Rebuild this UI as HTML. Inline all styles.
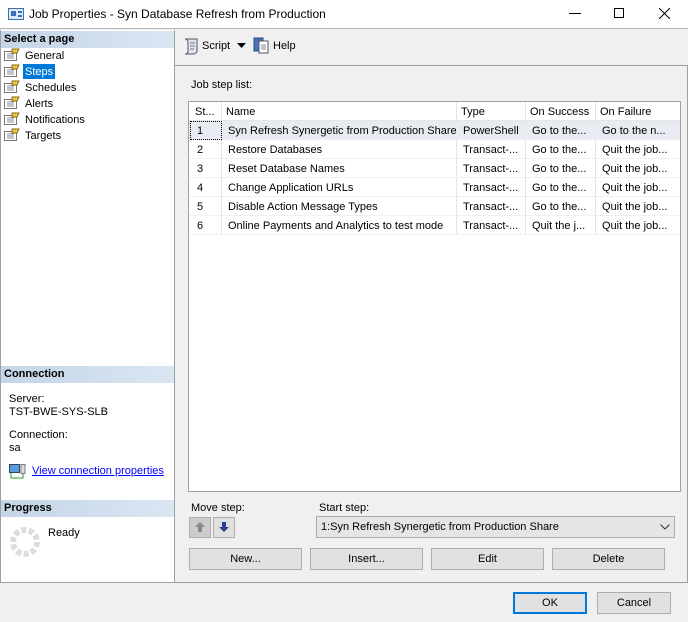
<!DOCTYPE html>
<html><head><style>
*{box-sizing:border-box;margin:0;padding:0}
body{width:688px;height:622px;background:#f0f0f0;font-family:"Liberation Sans",sans-serif;font-size:11px;color:#000;position:relative;overflow:hidden}
.a{position:absolute}
.hdr{position:absolute;left:1px;width:173px;height:17px;background:linear-gradient(90deg,#c4d5e7,#dae6f2);font-weight:bold;font-size:11px;padding:2px 3px}
.btn{position:absolute;height:22px;border:1px solid #adadad;background:#e1e1e1;text-align:center;line-height:20px}
.row{position:absolute;left:189px;width:491px;height:19px;border-bottom:1px solid #f0f0f0}
.row span{position:absolute;top:4px;white-space:nowrap}
.ic{position:absolute;left:3px;width:16px;height:13px}
</style></head><body>
<div class="a" style="left:0;top:0;width:688px;height:29px;background:#fff;border-bottom:1px solid #b4b4b4"></div>
<svg class="a" style="left:8px;top:7px" width="16" height="14"><rect x="0.5" y="1.5" width="15" height="11" fill="#dfe9f5" stroke="#3b6fb6"/><rect x="3" y="4" width="5" height="5" fill="#3b6fb6"/><rect x="10" y="4" width="4" height="2" fill="#3b6fb6"/><rect x="10" y="8" width="4" height="2" fill="#3b6fb6"/></svg>
<div class="a" style="left:29px;top:7px;font-size:12px">Job Properties - Syn Database Refresh from Production</div>
<div class="a" style="left:569px;top:13px;width:12px;height:1px;background:#000"></div>
<div class="a" style="left:614px;top:8px;width:10px;height:10px;border:1px solid #000"></div>
<svg class="a" style="left:659px;top:8px" width="11" height="11"><path d="M0 0L11 11M11 0L0 11" stroke="#000"/></svg>

<div class="a" style="left:174px;top:65px;width:514px;height:518px;border:1px solid #a0a0a0"></div>
<div class="a" style="left:0;top:30px;width:175px;height:553px;background:#fff;border:1px solid #a0a0a0;border-top:none"></div>
<div class="hdr" style="top:31px">Select a page</div>
<div class="a" style="left:0;top:48px">
<div style="position:relative;height:16px"><svg class="ic" style="left:4px" viewBox="0 0 16 13"><rect x="0.5" y="3.5" width="12" height="9" fill="#fff" stroke="#777"/><path d="M3 6h7M3 8h7M3 10h7" stroke="#889"/><path d="M8 1l7 0-2 4-5 0z" fill="#e8c84a" stroke="#8a6a10"/></svg><span class="a" style="left:25px;top:2px">General</span></div>
<div style="position:relative;height:16px"><svg class="ic" style="left:4px" viewBox="0 0 16 13"><rect x="0.5" y="3.5" width="12" height="9" fill="#fff" stroke="#777"/><path d="M3 6h7M3 8h7M3 10h7" stroke="#889"/><path d="M8 1l7 0-2 4-5 0z" fill="#e8c84a" stroke="#8a6a10"/></svg><span class="a" style="left:23px;top:0;background:#0078d7;color:#fff;padding:2px 2px;height:15px">Steps</span></div>
<div style="position:relative;height:16px"><svg class="ic" style="left:4px" viewBox="0 0 16 13"><rect x="0.5" y="3.5" width="12" height="9" fill="#fff" stroke="#777"/><path d="M3 6h7M3 8h7M3 10h7" stroke="#889"/><path d="M8 1l7 0-2 4-5 0z" fill="#e8c84a" stroke="#8a6a10"/></svg><span class="a" style="left:25px;top:2px">Schedules</span></div>
<div style="position:relative;height:16px"><svg class="ic" style="left:4px" viewBox="0 0 16 13"><rect x="0.5" y="3.5" width="12" height="9" fill="#fff" stroke="#777"/><path d="M3 6h7M3 8h7M3 10h7" stroke="#889"/><path d="M8 1l7 0-2 4-5 0z" fill="#e8c84a" stroke="#8a6a10"/></svg><span class="a" style="left:25px;top:2px">Alerts</span></div>
<div style="position:relative;height:16px"><svg class="ic" style="left:4px" viewBox="0 0 16 13"><rect x="0.5" y="3.5" width="12" height="9" fill="#fff" stroke="#777"/><path d="M3 6h7M3 8h7M3 10h7" stroke="#889"/><path d="M8 1l7 0-2 4-5 0z" fill="#e8c84a" stroke="#8a6a10"/></svg><span class="a" style="left:25px;top:2px">Notifications</span></div>
<div style="position:relative;height:16px"><svg class="ic" style="left:4px" viewBox="0 0 16 13"><rect x="0.5" y="3.5" width="12" height="9" fill="#fff" stroke="#777"/><path d="M3 6h7M3 8h7M3 10h7" stroke="#889"/><path d="M8 1l7 0-2 4-5 0z" fill="#e8c84a" stroke="#8a6a10"/></svg><span class="a" style="left:25px;top:2px">Targets</span></div>
</div>

<div class="hdr" style="top:366px">Connection</div>
<div class="a" style="left:9px;top:393px;line-height:13px">Server:<br>TST-BWE-SYS-SLB</div>
<div class="a" style="left:9px;top:429px;line-height:13px">Connection:<br>sa</div>
<svg class="a" style="left:9px;top:464px" width="17" height="16"><rect x="0.5" y="0.5" width="10" height="8" fill="#5a9be0" stroke="#345"/><rect x="12" y="0.5" width="4" height="9" fill="#ddd" stroke="#777"/><path d="M2 9v5h12v-4" stroke="#2a9a2a" fill="none"/></svg>
<div class="a" style="left:32px;top:465px;color:#0000ff;text-decoration:underline">View connection properties</div>
<div class="hdr" style="top:500px">Progress</div>
<svg class="a" style="left:9px;top:526px" width="32" height="32"><circle cx="16" cy="16" r="12" fill="none" stroke="#ddd" stroke-width="6" stroke-dasharray="5 2.5"/></svg>
<div class="a" style="left:48px;top:527px">Ready</div>

<svg class="a" style="left:182px;top:37px" width="18" height="18"><path d="M3 2h12v12c0 2-2 3-4 3H3c2 0 3-1 3-3V5C6 3 4 2 3 2z" fill="#dde4ef" stroke="#556"/><path d="M8 6h5M8 9h5M8 12h4" stroke="#778"/></svg>
<div class="a" style="left:202px;top:40px">Script</div>
<svg class="a" style="left:237px;top:43px" width="9" height="5"><path d="M0 0h9L4.5 5z" fill="#000"/></svg>
<svg class="a" style="left:253px;top:37px" width="17" height="17"><rect x="1" y="1" width="9" height="13" fill="#4a72b8" stroke="#2b4a80"/><rect x="6" y="4" width="9" height="12" fill="#fff" stroke="#556"/><path d="M8 8h5M8 10h5M8 12h5" stroke="#889"/></svg>
<div class="a" style="left:273px;top:40px">Help</div>

<div class="a" style="left:191px;top:79px">Job step list:</div>
<div class="a" style="left:188px;top:101px;width:493px;height:391px;background:#fff;border:1px solid #a0a0a0"></div>
<div class="a" style="left:189px;top:102px;width:491px;height:19px;border-bottom:1px solid #e5e5e5"></div>
<div class="a" style="left:221px;top:102px;width:1px;height:133px;background:#e5e5e5"></div>
<div class="a" style="left:456px;top:102px;width:1px;height:133px;background:#e5e5e5"></div>
<div class="a" style="left:525px;top:102px;width:1px;height:133px;background:#e5e5e5"></div>
<div class="a" style="left:595px;top:102px;width:1px;height:133px;background:#e5e5e5"></div>
<div class="a" style="left:195px;top:106px">St...</div><div class="a" style="left:226px;top:106px">Name</div><div class="a" style="left:461px;top:106px">Type</div><div class="a" style="left:530px;top:106px">On Success</div><div class="a" style="left:600px;top:106px">On Failure</div>
<div class="row" style="top:121px;background:#e8ecf2"><span style="left:8px">1</span><span style="left:39px">Syn Refresh Synergetic from Production Share</span><span style="left:274px">PowerShell</span><span style="left:343px">Go to the...</span><span style="left:413px">Go to the n...</span><div class="a" style="left:1px;top:0;width:32px;height:19px;border:1px dotted #000"></div></div>
<div class="row" style="top:140px"><span style="left:8px">2</span><span style="left:39px">Restore Databases</span><span style="left:274px">Transact-...</span><span style="left:343px">Go to the...</span><span style="left:413px">Quit the job...</span></div>
<div class="row" style="top:159px"><span style="left:8px">3</span><span style="left:39px">Reset Database Names</span><span style="left:274px">Transact-...</span><span style="left:343px">Go to the...</span><span style="left:413px">Quit the job...</span></div>
<div class="row" style="top:178px"><span style="left:8px">4</span><span style="left:39px">Change Application URLs</span><span style="left:274px">Transact-...</span><span style="left:343px">Go to the...</span><span style="left:413px">Quit the job...</span></div>
<div class="row" style="top:197px"><span style="left:8px">5</span><span style="left:39px">Disable Action Message Types</span><span style="left:274px">Transact-...</span><span style="left:343px">Go to the...</span><span style="left:413px">Quit the job...</span></div>
<div class="row" style="top:216px"><span style="left:8px">6</span><span style="left:39px">Online Payments and Analytics to test mode</span><span style="left:274px">Transact-...</span><span style="left:343px">Quit the j...</span><span style="left:413px">Quit the job...</span></div>

<div class="a" style="left:191px;top:502px">Move step:</div>
<div class="a" style="left:189px;top:517px;width:22px;height:21px;background:#ccc;border:1px solid #adadad"></div>
<svg class="a" style="left:194px;top:521px" width="12" height="12"><path d="M6 1L11 6H8V11H4V6H1z" fill="#888"/></svg>
<div class="a" style="left:213px;top:517px;width:22px;height:21px;background:#e1e1e1;border:1px solid #adadad"></div>
<svg class="a" style="left:218px;top:521px" width="12" height="12"><path d="M6 11L11 6H8V1H4V6H1z" fill="#2c3f8f"/></svg>
<div class="a" style="left:319px;top:502px">Start step:</div>
<div class="a" style="left:316px;top:516px;width:359px;height:22px;background:#e5e5e5;border:1px solid #adadad;padding:4px 4px">1:Syn Refresh Synergetic from Production Share</div>
<svg class="a" style="left:660px;top:524px" width="10" height="6"><path d="M0.5 0.5L5 5L9.5 0.5" stroke="#333" fill="none"/></svg>
<div class="btn" style="left:189px;top:548px;width:113px">New...</div>
<div class="btn" style="left:310px;top:548px;width:113px">Insert...</div>
<div class="btn" style="left:431px;top:548px;width:113px">Edit</div>
<div class="btn" style="left:552px;top:548px;width:113px">Delete</div>
<div class="btn" style="left:513px;top:592px;width:74px;border:2px solid #0078d7;line-height:18px">OK</div>
<div class="btn" style="left:597px;top:592px;width:74px">Cancel</div>
</body></html>
